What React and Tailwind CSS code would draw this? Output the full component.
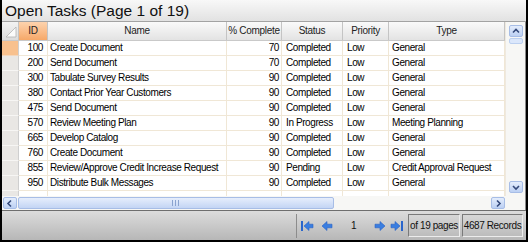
import React from 'react';

const columns = [
  { key: 'id', label: 'ID', w: 'w-[29px]', align: 'text-right pr-[4px]' },
  { key: 'name', label: 'Name', w: 'w-[179px]', align: 'text-left pl-[2px]' },
  { key: 'pct', label: '% Complete', w: 'w-[55px]', align: 'text-right pr-[2px]' },
  { key: 'status', label: 'Status', w: 'w-[61px]', align: 'text-left pl-[4px]' },
  { key: 'priority', label: 'Priority', w: 'w-[46px]', align: 'text-left pl-[4px]' },
  { key: 'type', label: 'Type', w: 'w-[116px]', align: 'text-left pl-[3px]' },
];

const rows = [
  { id: 100, name: 'Create Document', pct: 70, status: 'Completed', priority: 'Low', type: 'General' },
  { id: 200, name: 'Send Document', pct: 70, status: 'Completed', priority: 'Low', type: 'General' },
  { id: 300, name: 'Tabulate Survey Results', pct: 90, status: 'Completed', priority: 'Low', type: 'General' },
  { id: 380, name: 'Contact Prior Year Customers', pct: 90, status: 'Completed', priority: 'Low', type: 'General' },
  { id: 475, name: 'Send Document', pct: 90, status: 'Completed', priority: 'Low', type: 'General' },
  { id: 570, name: 'Review Meeting Plan', pct: 90, status: 'In Progress', priority: 'Low', type: 'Meeting Planning' },
  { id: 665, name: 'Develop Catalog', pct: 90, status: 'Completed', priority: 'Low', type: 'General' },
  { id: 760, name: 'Create Document', pct: 90, status: 'Completed', priority: 'Low', type: 'General' },
  { id: 855, name: 'Review/Approve Credit Increase Request', pct: 90, status: 'Pending', priority: 'Low', type: 'Credit Approval Request' },
  { id: 950, name: 'Distribute Bulk Messages', pct: 90, status: 'Completed', priority: 'Low', type: 'General' },
];

const ScrollBtn = ({ dir }) => {
  const paths = {
    up: 'M3 6.5 L6 3.5 L9 6.5',
    down: 'M3 4 L6 7 L9 4',
    left: 'M7 2.5 L4 5.5 L7 8.5',
    right: 'M5 2.5 L8 5.5 L5 8.5',
  };
  return (
    <div className="w-[14px] h-[12px] shrink-0 rounded-[2px] border border-[#a7bde6] bg-gradient-to-b from-[#e4edfc] to-[#bcd0f3] flex items-center justify-center">
      <svg width="12" height="11" viewBox="0 0 12 11">
        <path d={paths[dir]} fill="none" stroke="#34497a" strokeWidth="1.6" />
      </svg>
    </div>
  );
};

const PagerArrow = ({ dir, bar }) => (
  <svg width="14" height="12" viewBox="0 0 14 12" className="shrink-0">
    <g transform={dir === 'right' ? 'translate(14,0) scale(-1,1)' : undefined}>
      {bar && <rect x="1" y="1" width="2" height="10" fill="#2a66cc" />}
      <polygon points={bar ? '4,6 9,1.5 9,4.2 13,4.2 13,7.8 9,7.8 9,10.5' : '2,6 7,1.5 7,4.2 12,4.2 12,7.8 7,7.8 7,10.5'} fill="#3a7ee0" stroke="#2a62c4" strokeWidth="0.6" />
    </g>
  </svg>
);

export default function App() {
  return (
    <div className="w-[528px] h-[242px] bg-white border-x-2 border-b-2 border-black flex flex-col font-['Liberation_Sans',Arial,sans-serif] text-black overflow-hidden">
      {/* Title */}
      <div className="h-[22px] shrink-0 bg-gradient-to-b from-[#f8f8f8] to-[#e2e2e2] border-b border-[#a3a3a3] pl-[3px] text-[15.5px] leading-[21px] text-[#111]">
        Open Tasks (Page 1 of 19)
      </div>

      {/* Grid body */}
      <div className="flex h-[174px] shrink-0">
        <div className="w-[503px] shrink-0 flex flex-col overflow-hidden">
          {/* Header */}
          <div className="flex h-[19px] shrink-0 text-[10px] tracking-[-0.3px] leading-[18px] text-[#222] border-b border-[#c9c9c9]">
            <div className="w-[17px] bg-gradient-to-b from-[#f3f3f3] to-[#dcdcdc] border-r border-[#c4c4c4] relative">
              <svg width="17" height="18" viewBox="0 0 17 18" className="absolute left-0 top-0">
                <polygon points="4,15 14,15 14,5" fill="#fbfbfb" stroke="#b4b4b4" strokeWidth="0.8" />
              </svg>
            </div>
            {columns.map(c => (
              <div
                key={c.key}
                className={`${c.w} text-center border-r border-[#c4c4c4] ${c.key === 'id' ? 'bg-gradient-to-b from-[#fdd3ad] to-[#f6a868]' : 'bg-gradient-to-b from-[#fafafa] to-[#e3e3e3]'}`}
              >
                {c.label}
              </div>
            ))}
          </div>
          {/* Rows */}
          {rows.map((r, i) => (
            <div key={r.id} className="flex h-[15px] shrink-0 text-[10px] tracking-[-0.4px] leading-[14px]">
              <div className={`w-[17px] border-r border-b ${i === 0 ? 'bg-[#f8c18e] border-[#f3d7bd]' : 'bg-[#e9e7e4] border-[#f7f6f4]'} border-r-[#cfcfcf]`} />
              {columns.map(c => (
                <div key={c.key} className={`${c.w} ${c.align} border-r border-b border-[#f0e7d6] whitespace-nowrap overflow-hidden`}>
                  {r[c.key]}
                </div>
              ))}
            </div>
          ))}
          {/* partially visible next row */}
          <div className="flex h-[15px] shrink-0">
            <div className="w-[17px] bg-[#e9e7e4] border-r border-[#cfcfcf]" />
            {columns.map(c => (
              <div key={c.key} className={`${c.w} border-r border-[#f0e7d6]`} />
            ))}
          </div>
        </div>

        {/* Vertical scrollbar */}
        <div className="w-[21px] shrink-0 bg-[#f7f7f5] border-l border-[#efe9df] border-r border-r-[#8a8a8a] flex flex-col items-center pt-[3px]">
          <ScrollBtn dir="up" />
          <div className="w-[14px] h-[6px] mt-[1px] rounded-[2px] border border-[#bcd0f0] bg-[#dbe7fb]" />
          <div className="mt-auto mb-[3px]">
            <ScrollBtn dir="down" />
          </div>
        </div>
      </div>

      {/* Horizontal scrollbar */}
      <div className="h-[14px] shrink-0 flex items-center bg-[#f7f7f5] border-r border-[#8a8a8a]">
        <div className="w-[503px] shrink-0 flex items-center pl-[1px]">
          <ScrollBtn dir="left" />
          <div className="w-[316px] h-[12px] ml-[1px] shrink-0 rounded-[2px] border border-[#a7bde6] bg-gradient-to-b from-[#e6eefc] to-[#c3d5f4] flex items-center justify-center">
            <svg width="8" height="6" viewBox="0 0 8 6">
              <rect x="0" y="0" width="1" height="6" fill="#8aa3cf" />
              <rect x="3" y="0" width="1" height="6" fill="#8aa3cf" />
              <rect x="6" y="0" width="1" height="6" fill="#8aa3cf" />
            </svg>
          </div>
          <div className="flex-1" />
          <ScrollBtn dir="right" />
        </div>
      </div>

      {/* Pager */}
      <div className="h-[30px] shrink-0 border-t border-[#6e6e6e] bg-gradient-to-b from-[#dcdcdc] to-[#b7b7b7] flex items-center text-[10px] tracking-[-0.4px] text-[#111]">
        <div className="w-[295px] shrink-0 h-[24px] border-r border-[#8c8c8c]" />
        <div className="flex items-center shrink-0 h-[24px] pl-[3px]">
          <PagerArrow dir="left" bar />
          <div className="w-[6px]" />
          <PagerArrow dir="left" />
          <div className="w-[39px] text-center">1</div>
          <PagerArrow dir="right" />
          <div className="w-[3px]" />
          <PagerArrow dir="right" bar />
        </div>
        <div className="ml-[4px] shrink-0 h-[23px] w-[52px] border border-t-[#7a7a7a] border-l-[#7a7a7a] border-b-[#ececec] border-r-[#ececec] flex items-center justify-center whitespace-nowrap">
          of 19 pages
        </div>
        <div className="ml-[2px] shrink-0 h-[23px] w-[61px] border border-t-[#7a7a7a] border-l-[#7a7a7a] border-b-[#ececec] border-r-[#ececec] flex items-center justify-center whitespace-nowrap">
          4687 Records
        </div>
      </div>
    </div>
  );
}
